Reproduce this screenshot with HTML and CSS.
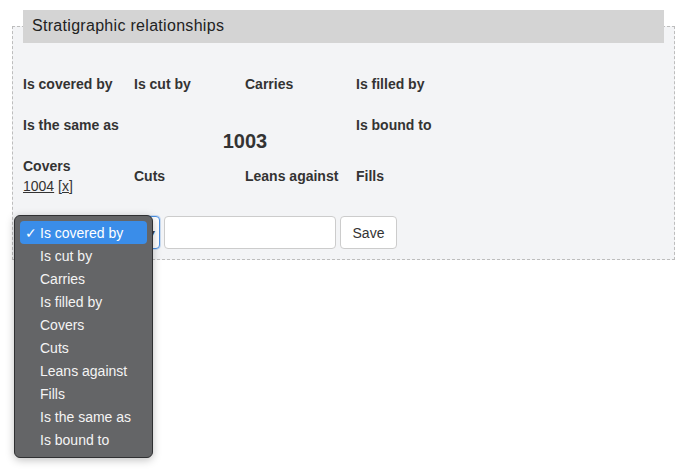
FILE: index.html
```html
<!DOCTYPE html>
<html lang="en">
<head>
<meta charset="utf-8">
<title>Stratigraphic relationships</title>
<link rel="stylesheet" href="styles.css">
</head>
<body>
<section class="strat">
  <h2 class="strat-title">Stratigraphic relationships</h2>
  <div class="rel-grid">
    <div class="cell row1 col1"><b>Is covered by</b></div>
    <div class="cell row1 col2"><b>Is cut by</b></div>
    <div class="cell row1 col3"><b>Carries</b></div>
    <div class="cell row1 col4"><b>Is filled by</b></div>

    <div class="cell row2 col1 top"><b>Is the same as</b></div>
    <div class="cell row2 center-unit">1003</div>
    <div class="cell row2 col4 top"><b>Is bound to</b></div>

    <div class="cell row3 col1"><b>Covers</b><span class="item"><a href="#" class="unit-link">1004</a> [<a href="#" class="unit-link">x</a>]</span></div>
    <div class="cell row3 col2"><b>Cuts</b></div>
    <div class="cell row3 col3"><b>Leans against</b></div>
    <div class="cell row3 col4"><b>Fills</b></div>
  </div>
  <form class="rel-form">
    <div class="select-wrap">
      <div class="select"><span class="select-value">Is covered by</span><span class="arrow">&#9662;</span></div>
      <ul class="popup">
        <li class="opt selected"><span class="check">&#10003;</span>Is covered by</li>
        <li class="opt">Is cut by</li>
        <li class="opt">Carries</li>
        <li class="opt">Is filled by</li>
        <li class="opt">Covers</li>
        <li class="opt">Cuts</li>
        <li class="opt">Leans against</li>
        <li class="opt">Fills</li>
        <li class="opt">Is the same as</li>
        <li class="opt">Is bound to</li>
      </ul>
    </div>
    <input class="rel-input" type="text">
    <button class="btn" type="button">Save</button>
  </form>
</section>
</body>
</html>
```
FILE: styles.css
```css
html, body {
  margin: 0;
  padding: 0;
  background: #ffffff;
}
body {
  box-sizing: border-box;
  min-height: 470px;
  padding-top: 26px;
  font-family: "Liberation Sans", Arial, sans-serif;
  color: #333333;
}
.strat {
  box-sizing: border-box;
  width: 663px;
  margin: 0 0 0 12px;
  padding: 0 10px 10px 10px;
  border: 1px dashed #bdbdbd;
  background: #f3f4f6;
}
.strat-title {
  box-sizing: border-box;
  height: 33px;
  margin: -17px 0 0 0;
  padding: 7px 9px 8px 9px;
  background: #d4d4d4;
  font-size: 16px;
  font-weight: normal;
  line-height: 18px;
  letter-spacing: 0.3px;
  color: #222222;
}
.rel-grid {
  display: grid;
  grid-template-columns: repeat(4, 111px);
  grid-template-rows: 40px 52px 40px;
  margin-top: 21px;
  font-size: 14px;
  line-height: 20px;
}
.cell {
  display: flex;
  flex-direction: column;
  justify-content: center;
  color: #333333;
  white-space: nowrap;
}
.cell b {
  font-weight: bold;
}
.row1 { grid-row: 1; }
.row2 { grid-row: 2; }
.row3 { grid-row: 3; }
.col1 { grid-column: 1; }
.col2 { grid-column: 2; }
.col3 { grid-column: 3; }
.col4 { grid-column: 4; }
.cell.top {
  justify-content: flex-start;
  padding-top: 11px;
}
.center-unit {
  grid-column: 2 / 4;
  justify-content: flex-end;
  align-items: center;
  padding-bottom: 3px;
  font-size: 20px;
  line-height: 24px;
  font-weight: bold;
  color: #333333;
}
.item {
  font-weight: normal;
}
.unit-link {
  color: #333333;
  text-decoration: underline;
}
.rel-form {
  display: flex;
  gap: 4px;
  height: 33px;
  margin: 20px 0 0 0;
}
.select-wrap {
  position: relative;
  width: 137px;
}
.select {
  box-sizing: border-box;
  height: 33px;
  padding: 0 4px 0 8px;
  border: 1px solid #4a90e2;
  border-radius: 4px;
  background: #ffffff;
  box-shadow: 0 0 0 1px rgba(74, 144, 226, 0.25);
  font-size: 14px;
  line-height: 31px;
  display: flex;
  justify-content: space-between;
}
.select-value {
  visibility: hidden;
}
.arrow {
  font-size: 10px;
  color: #444444;
}
.popup {
  position: absolute;
  left: -9px;
  top: -1px;
  z-index: 2;
  box-sizing: border-box;
  width: 139px;
  margin: 0;
  padding: 5px 5px 6px 5px;
  list-style: none;
  background: #646567;
  border: 1px solid #2f3032;
  border-radius: 6px;
  box-shadow: 0 2px 8px rgba(0, 0, 0, 0.25);
  font-size: 14px;
  line-height: 23px;
  color: #f4f4f4;
}
.opt {
  position: relative;
  box-sizing: border-box;
  height: 23px;
  padding: 1px 0 0 20px;
  line-height: 22px;
  border-radius: 4px;
  white-space: nowrap;
}
.opt.selected {
  background: #3a8de9;
  color: #ffffff;
}
.check {
  position: absolute;
  left: 5px;
  top: 1px;
  font-size: 14px;
}
.rel-input {
  box-sizing: border-box;
  width: 172px;
  height: 33px;
  margin: 0;
  border: 1px solid #cccccc;
  border-radius: 4px;
  background: #ffffff;
}
.btn {
  box-sizing: border-box;
  width: 57px;
  height: 33px;
  margin: 0;
  padding: 0;
  border: 1px solid #cccccc;
  border-radius: 4px;
  background: #ffffff;
  font-family: "Liberation Sans", Arial, sans-serif;
  font-size: 14px;
  color: #333333;
}
```
